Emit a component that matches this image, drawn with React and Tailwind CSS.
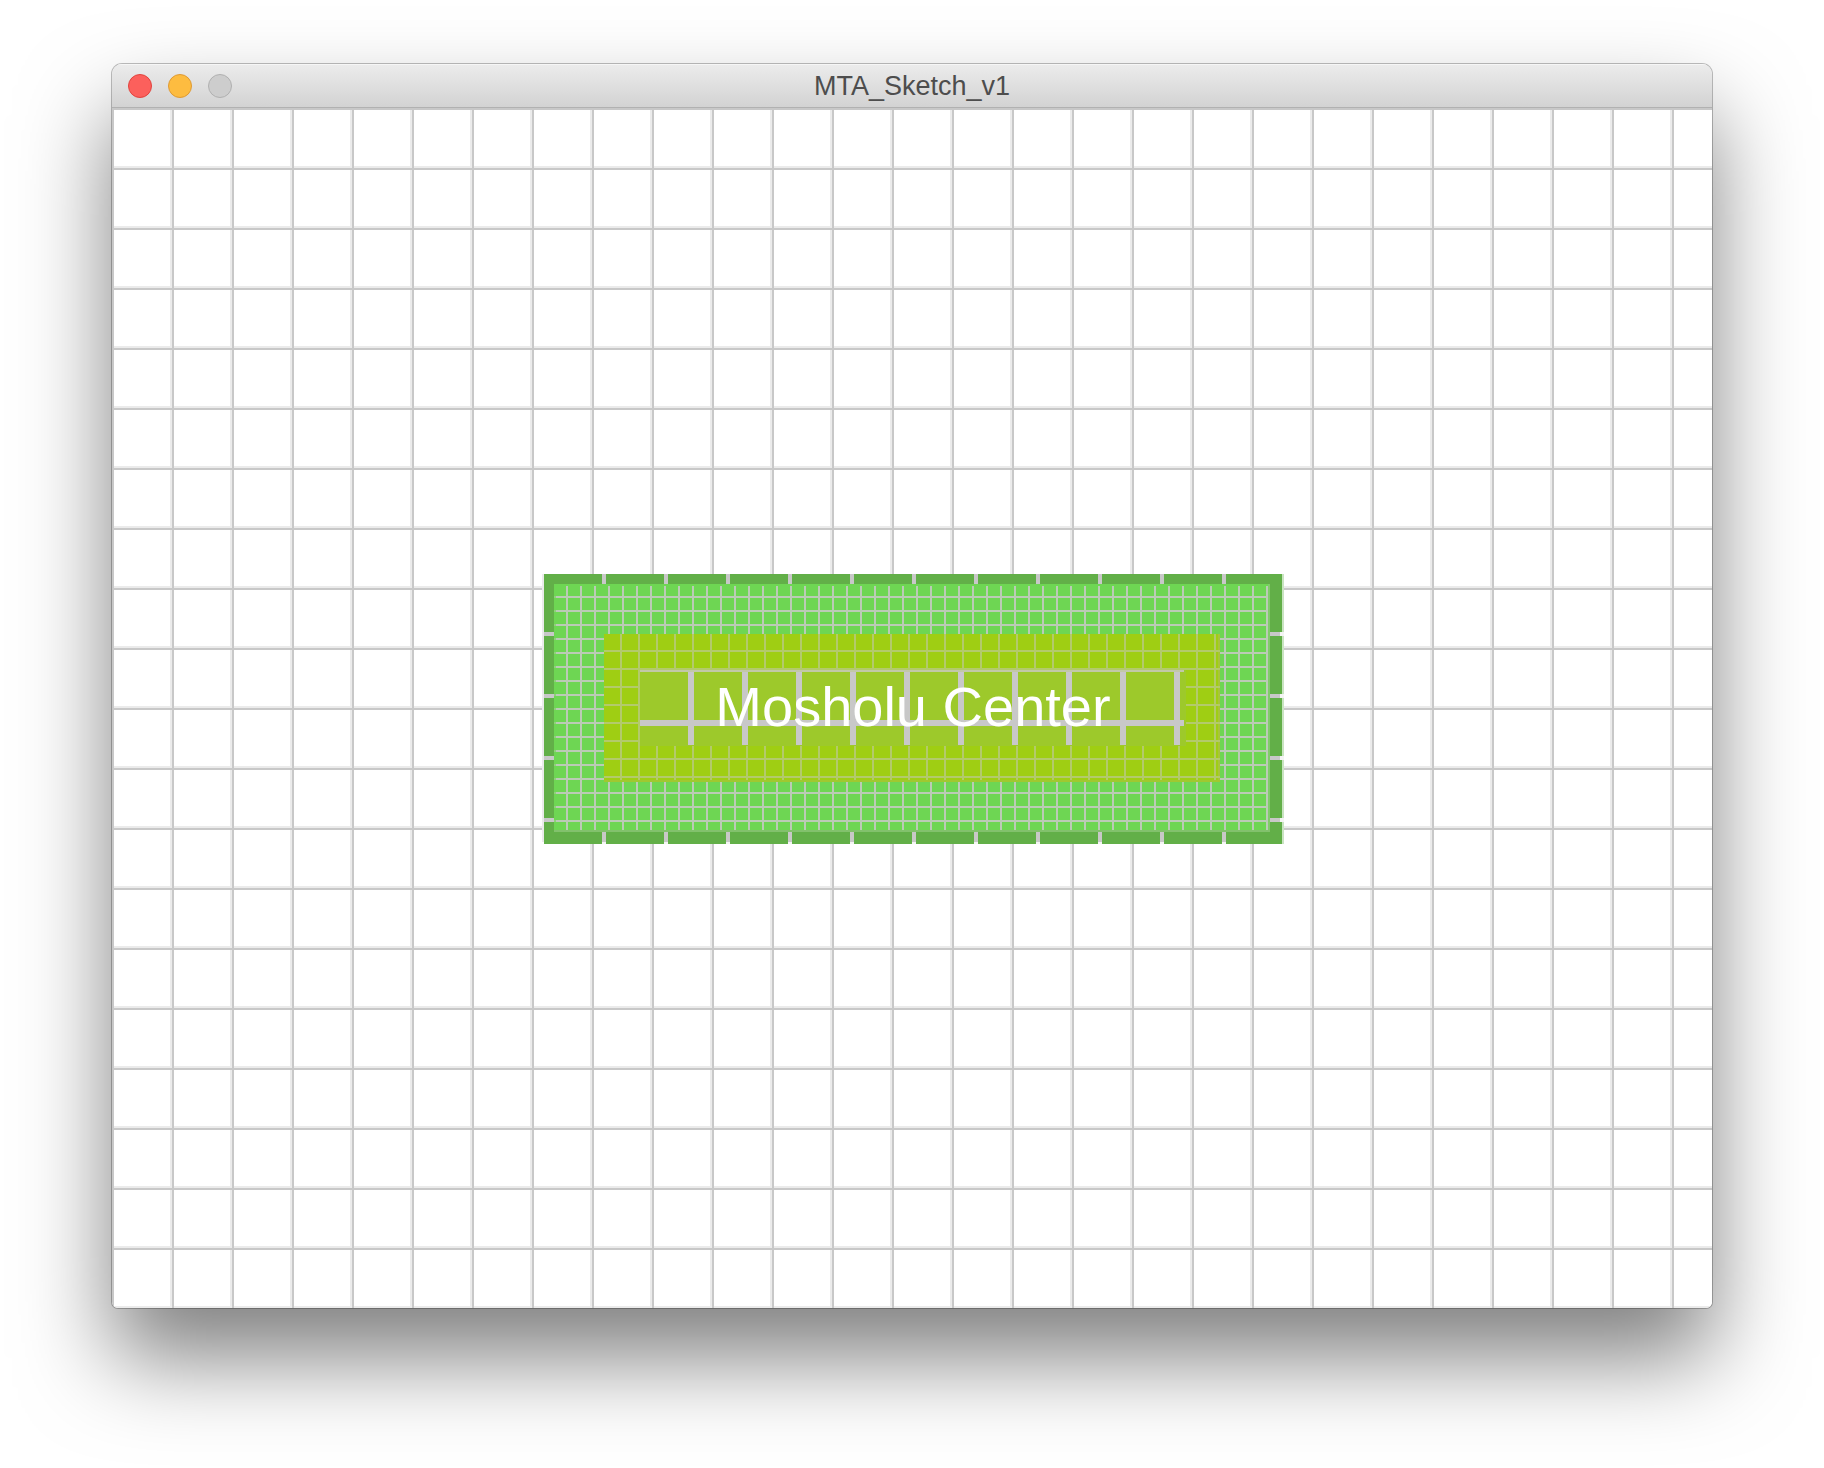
import React from "react";

const steps = (first, last, period) =>
  Array.from({ length: Math.floor((last - first) / period) + 1 }, (_, i) => first + i * period);

function Lines({ xs = [], ys = [], x, y, right, bottom, size, color }) {
  return (
    <g fill={color}>
      {xs.map((v) => (
        <rect key={"x" + v} x={v} y={y} width={size} height={bottom - y} />
      ))}
      {ys.map((v) => (
        <rect key={"y" + v} x={x} y={v} width={right - x} height={size} />
      ))}
    </g>
  );
}

function Station() {
  return (
    <g>
      {/* outer wall */}
      <rect x="430" y="466" width="2" height="268" fill="#ebebeb" />
      <rect x="432" y="466" width="738" height="270" fill="#62af48" />
      <rect x="1170" y="466" width="2" height="270" fill="#c9e4c1" />
      <Lines xs={steps(490, 1110, 62)} y={466} bottom={734} size={4} color="#c8c8c8" />
      <Lines ys={steps(524, 710, 62)} x={432} right={1168} size={4} color="#c8c8c8" />
      <g fill="#f4f4f4">
        {steps(490, 1110, 62).map((v) => (
          <rect key={v} x={v} y="734" width="4" height="2" />
        ))}
        {steps(524, 710, 62).map((v) => (
          <rect key={v} x="1168" y={v} width="4" height="4" />
        ))}
      </g>
      {/* platform */}
      <rect x="442" y="476" width="716" height="248" fill="#82c16c" />
      <rect x="442" y="476" width="714" height="246" fill="#6ed653" />
      <rect x="1156" y="476" width="2" height="246" fill="#80cc69" />
      <Lines
        xs={steps(454, 1154, 14)}
        ys={steps(488, 712, 14)}
        x={444}
        y={478}
        right={1156}
        bottom={722}
        size={2}
        color="#bbcbb6"
      />
      <Lines ys={steps(488, 712, 14)} x={442} right={444} size={2} color="#8fcf7b" />
      {/* concourse */}
      <rect x="492" y="526" width="616" height="146" fill="#a8c43b" />
      <rect x="492" y="526" width="614" height="146" fill="#9fce13" />
      <rect x="492" y="672" width="616" height="2" fill="#a0c830" />
      <Lines
        xs={steps(508, 1102, 18)}
        ys={steps(542, 668, 18)}
        x={492}
        y={526}
        right={1108}
        bottom={672}
        size={2}
        color="#b3ca6b"
      />
      {/* hall */}
      <rect x="528" y="562" width="546" height="76" fill="#9dc92b" />
      <rect x="528" y="562" width="544" height="2" fill="#c2c8a8" />
      <Lines xs={steps(576, 1062, 54)} y={564} bottom={637} size={6} color="#c8c8c8" />
      <Lines ys={[612]} x={528} right={1072} size={6} color="#c8c8c8" />
      <text
        x="801"
        y="618"
        textAnchor="middle"
        fill="#ffffff"
        className="font-['Liberation_Sans',Arial,sans-serif] text-[56px]"
      >
        Mosholu Center
      </text>
    </g>
  );
}

function Sketch() {
  return (
    <svg
      viewBox="0 0 1600 1200"
      className="block w-full"
      shapeRendering="crispEdges"
      role="img"
      aria-label="Station map"
    >
      <defs>
        <pattern id="grid" width="60" height="60" patternUnits="userSpaceOnUse">
          <rect width="60" height="60" fill="#ffffff" />
          <path d="M58 0h2v60h-2zM0 58h60v2H0z" fill="#ebebeb" />
          <path d="M0 0h2v60H0zM0 0h60v2H0z" fill="#c8c8c8" />
        </pattern>
      </defs>
      <rect width="1600" height="1200" fill="url(#grid)" />
      <Station />
    </svg>
  );
}

export default function App() {
  return (
    <main className="min-h-screen overflow-hidden bg-white px-28 pt-16 pb-40 font-['Liberation_Sans',Arial,sans-serif]">
      <section className="rounded-t-[10px] rounded-b-[6px] shadow-[0_0_0_1px_rgba(0,0,0,0.25),0_50px_90px_rgba(0,0,0,0.5)]">
        <div className="overflow-hidden rounded-t-[10px] rounded-b-[6px]">
          <header className="grid h-11 grid-cols-[1fr_auto_1fr] items-center bg-linear-to-b from-[#ececec] to-[#d2d2d2] px-4 shadow-[inset_0_1px_0_#f6f6f6,inset_0_-1px_0_#b1b1b1]">
            <div className="flex gap-4">
              <button aria-label="Close" className="size-6 rounded-full border border-[#e0443e] bg-[#fc605c]" />
              <button aria-label="Minimize" className="size-6 rounded-full border border-[#de9a34] bg-[#fdbc40]" />
              <button aria-label="Zoom" disabled className="size-6 rounded-full border border-[#b0b0b0] bg-[#cdcdcd]" />
            </div>
            <h1 className="text-[27px] leading-8 text-[#4d4d4d]">MTA_Sketch_v1</h1>
          </header>
          <Sketch />
        </div>
      </section>
    </main>
  );
}
